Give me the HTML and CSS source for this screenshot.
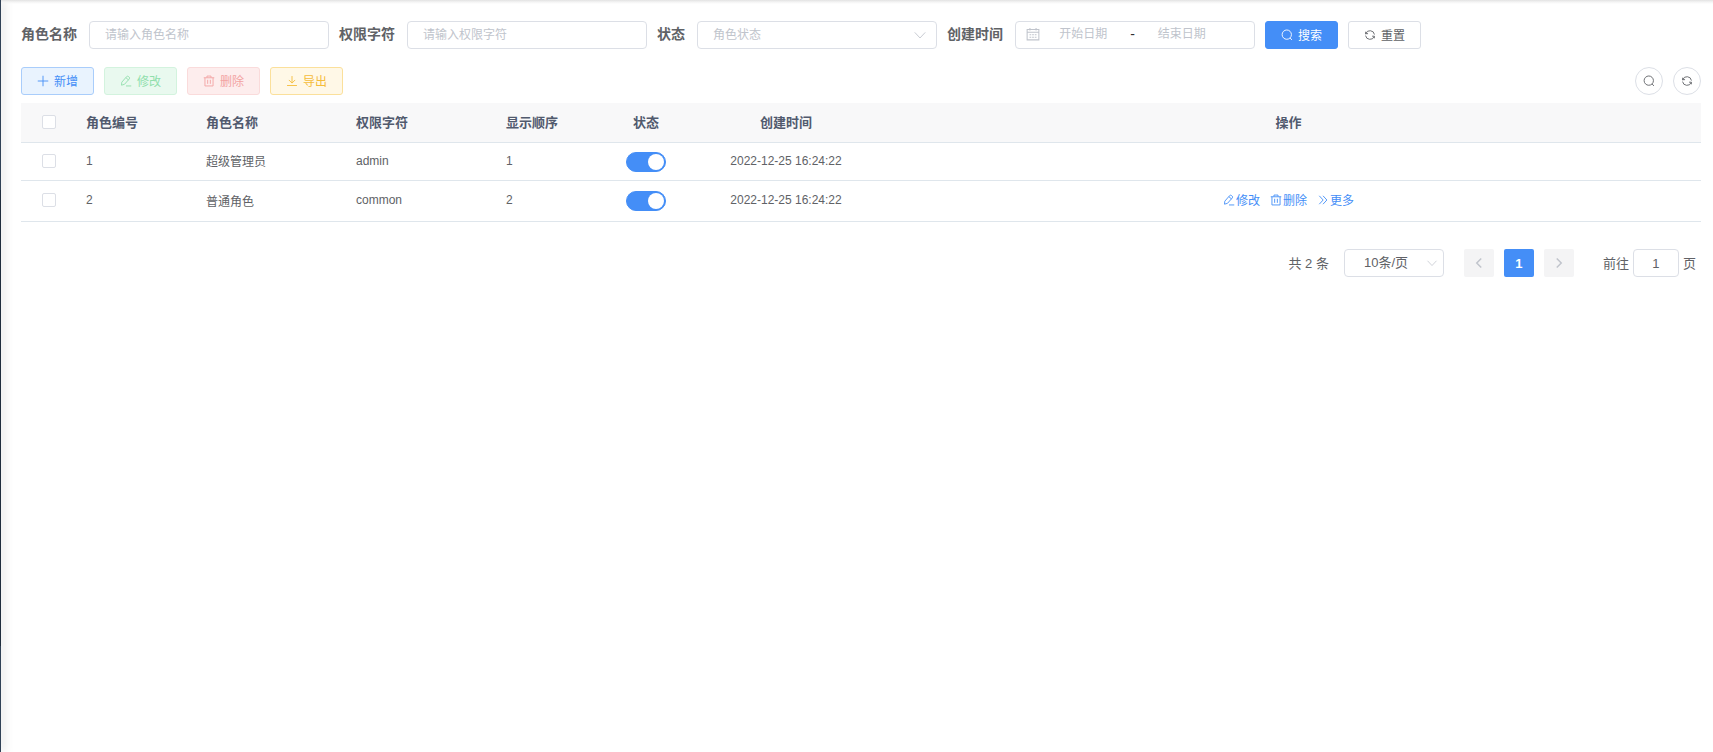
FILE: index.html
```html
<!DOCTYPE html>
<html lang="zh-CN">
<head>
<meta charset="utf-8">
<title>角色管理</title>
<link rel="stylesheet" href="styles.css">
</head>
<body>
<svg class="sprite" aria-hidden="true">
  <symbol id="i-search" viewBox="0 0 16 16"><circle cx="7.7" cy="7.5" r="6.2"/><path d="M12.2 12l2.3 2.6"/></symbol>
  <symbol id="i-refresh" viewBox="0 0 16 16"><path d="M2.2 7V3.6M2.4 6.2H5.4M2.4 6A6 6 0 0 1 13.9 7.4M13.8 12.4V9.6H10.8M13.6 10A6 6 0 0 1 2.1 8.8"/></symbol>
  <symbol id="i-plus" viewBox="0 0 16 16"><path d="M8 1v14M1 8h14"/></symbol>
  <symbol id="i-edit" viewBox="0 0 16 16"><path d="M2.4 9.6L8.8 2.2Q10 1 11.3 2L12.2 2.8Q13.4 3.9 12.4 5.2L6 12.4L2 13.6ZM7.9 3.6L11.2 6.5M8 14.6h7"/></symbol>
  <symbol id="i-delete" viewBox="0 0 16 16"><path d="M1 3.7h14M5.3 3.4V1.4h5.4v2M2.6 3.7v10.9h10.8V3.7M6.2 6.4v5.4M9.8 6.4v5.4"/></symbol>
  <symbol id="i-download" viewBox="0 0 16 16"><path d="M8 1.4v9.2M3.8 6.6L8 10.8l4.2-4.2M1.4 14h13.2"/></symbol>
  <symbol id="i-more" viewBox="0 0 16 16"><path d="M3 2.4L8.2 8L3 13.6M8 2.4L13.2 8L8 13.6"/></symbol>
  <symbol id="i-down" viewBox="0 0 16 16"><path d="M2 5l6 6.4L14 5"/></symbol>
  <symbol id="i-left" viewBox="0 0 16 16"><path d="M11 2L5 8l6 6"/></symbol>
  <symbol id="i-right" viewBox="0 0 16 16"><path d="M5 2l6 6-6 6"/></symbol>
  <symbol id="i-date" viewBox="0 0 16 16"><path d="M1.3 2.8h13.4v11.9H1.3zM1.3 6h13.4M4.5 1v3M11.5 1v3M4 8.8h2M7 8.8h2M10 8.8h2M4 11.8h2M7 11.8h2M10 11.8h2"/></symbol>
</svg>

<div class="app">
  <aside class="sidebar"><div class="submenu"></div></aside>
  <main class="content">
    <form class="filters">
      <div class="field">
        <label for="role-name">角色名称</label>
        <input class="control" id="role-name" type="text" placeholder="请输入角色名称">
      </div>
      <div class="field">
        <label for="role-key">权限字符</label>
        <input class="control" id="role-key" type="text" placeholder="请输入权限字符">
      </div>
      <div class="field">
        <label for="role-status">状态</label>
        <div class="select">
          <select class="control" id="role-status"><option>角色状态</option></select>
          <svg class="icon arrow"><use href="#i-down"/></svg>
        </div>
      </div>
      <div class="field">
        <label for="date-start">创建时间</label>
        <div class="control range">
          <svg class="icon"><use href="#i-date"/></svg>
          <input id="date-start" type="text" placeholder="开始日期">
          <span>-</span>
          <input type="text" placeholder="结束日期" aria-label="结束日期">
        </div>
      </div>
      <button class="btn primary" type="button"><svg class="icon"><use href="#i-search"/></svg><span>搜索</span></button>
      <button class="btn" type="button"><svg class="icon"><use href="#i-refresh"/></svg><span>重置</span></button>
    </form>

    <div class="toolbar">
      <button class="btn add" type="button"><svg class="icon"><use href="#i-plus"/></svg><span>新增</span></button>
      <button class="btn edit" type="button" disabled><svg class="icon"><use href="#i-edit"/></svg><span>修改</span></button>
      <button class="btn remove" type="button" disabled><svg class="icon"><use href="#i-delete"/></svg><span>删除</span></button>
      <button class="btn export" type="button"><svg class="icon"><use href="#i-download"/></svg><span>导出</span></button>
      <div class="tools">
        <button class="round" type="button" aria-label="显示搜索"><svg class="icon"><use href="#i-search"/></svg></button>
        <button class="round" type="button" aria-label="刷新"><svg class="icon"><use href="#i-refresh"/></svg></button>
      </div>
    </div>

    <table class="roles">
      <colgroup>
        <col class="w-check"><col class="w-id"><col class="w-text"><col class="w-text"><col class="w-short"><col class="w-short"><col class="w-time"><col>
      </colgroup>
      <thead>
        <tr>
          <th class="center"><input type="checkbox" aria-label="全选"></th>
          <th>角色编号</th><th>角色名称</th><th>权限字符</th><th>显示顺序</th>
          <th class="center">状态</th><th class="center">创建时间</th><th class="center">操作</th>
        </tr>
      </thead>
      <tbody>
        <tr>
          <td class="center"><input type="checkbox" aria-label="选择超级管理员"></td>
          <td>1</td><td>超级管理员</td><td>admin</td><td>1</td>
          <td class="center toggle"><input class="switch" type="checkbox" checked aria-label="超级管理员状态"></td>
          <td class="center">2022-12-25 16:24:22</td><td></td>
        </tr>
        <tr class="tall">
          <td class="center"><input type="checkbox" aria-label="选择普通角色"></td>
          <td>2</td><td>普通角色</td><td>common</td><td>2</td>
          <td class="center toggle"><input class="switch" type="checkbox" checked aria-label="普通角色状态"></td>
          <td class="center">2022-12-25 16:24:22</td>
          <td>
            <div class="actions">
              <button type="button"><svg class="icon"><use href="#i-edit"/></svg><span>修改</span></button>
              <button type="button"><svg class="icon"><use href="#i-delete"/></svg><span>删除</span></button>
              <button type="button"><svg class="icon"><use href="#i-more"/></svg><span>更多</span></button>
            </div>
          </td>
        </tr>
      </tbody>
    </table>

    <nav class="pagination" aria-label="分页">
      <span>共 2 条</span>
      <div class="select size">
        <select class="control" aria-label="每页条数"><option>10条/页</option></select>
        <svg class="icon arrow"><use href="#i-down"/></svg>
      </div>
      <div class="pages">
        <button type="button" disabled aria-label="上一页"><svg class="icon"><use href="#i-left"/></svg></button>
        <button class="current" type="button">1</button>
        <button type="button" disabled aria-label="下一页"><svg class="icon"><use href="#i-right"/></svg></button>
      </div>
      <label class="jump"><span>前往</span><input class="control" type="text" value="1"><span>页</span></label>
    </nav>
  </main>
</div>
</body>
</html>
```
FILE: styles.css
```css
* { box-sizing: border-box; }

body {
  margin: 0;
  background: #fff;
  color: #606266;
  font-family: "Liberation Sans", "Noto Sans CJK SC", sans-serif;
  font-size: 12px;
}

button, input, select { font: inherit; color: inherit; }
button { cursor: pointer; }

.sprite { display: none; }

.icon {
  flex: none;
  width: 12px;
  height: 12px;
  fill: none;
  stroke: currentColor;
  stroke-width: 1.2;
}

.app { display: flex; min-height: 100vh; }

.sidebar {
  flex: none;
  width: 1px;
  padding-top: 190px;
  background: #304156;
  box-shadow: 2px 0 8px rgba(0, 0, 0, .5);
}
.submenu { height: 456px; background: #1f2d3d; }

.content {
  flex: 1;
  min-width: 0;
  padding: 21px 12px 20px 20px;
  background: linear-gradient(#e2e2e2, #f4f4f4 2px, transparent 4px);
}

/* Filter form */
.filters { display: flex; flex-wrap: wrap; align-items: center; gap: 10px; }
.field { display: flex; align-items: center; gap: 12px; }
.field label { padding-bottom: 2px; font-size: 14px; font-weight: 700; line-height: 26px; }

.control {
  width: 240px;
  height: 28px;
  padding: 0 15px;
  border: 1px solid #dcdfe6;
  border-radius: 4px;
  background: #fff;
  outline: none;
}
::placeholder { color: #c0c4cc; opacity: 1; }

.select { position: relative; display: flex; }
.select select { appearance: none; color: #c0c4cc; }
.select .arrow {
  position: absolute;
  top: 7px;
  right: 10px;
  width: 14px;
  height: 14px;
  color: #c0c4cc;
  stroke-width: 1;
  pointer-events: none;
}

.range { display: flex; align-items: center; padding: 0 29px 2px 10px; }
.range .icon { width: 14px; height: 14px; color: #c0c4cc; }
.range input {
  flex: 1;
  min-width: 0;
  padding: 0;
  border: 0;
  outline: none;
  text-align: center;
}
.range span { width: 12px; text-align: center; font-size: 14px; color: #303133; }

/* Buttons */
.btn {
  display: inline-flex;
  align-items: center;
  gap: 5px;
  height: 28px;
  padding: 0 15px;
  border: 1px solid #dcdfe6;
  border-radius: 3px;
  background: #fff;
}
.btn span, .actions span, .pagination span { padding-bottom: 2px; }
.primary { border-color: #448ef7; background: #448ef7; color: #fff; }
.add { border-color: #a9cdfb; background: #e9f3fe; color: #448ef7; }
.edit { border-color: #d3f3de; background: #e9f9ef; color: #90dfac; }
.remove { border-color: #fadbdb; background: #fdeded; color: #f3a3a3; }
.export { border-color: #fbe09b; background: #fff8e7; color: #f5bc3a; }

.toolbar { display: flex; gap: 10px; margin: 18px 0 8px; }
.tools { display: flex; gap: 10px; margin-left: auto; }
.round {
  display: grid;
  place-items: center;
  width: 28px;
  height: 28px;
  padding: 0;
  border: 1px solid #dcdfe6;
  border-radius: 50%;
  background: #fff;
}

/* Role table */
.roles { width: 100%; border-collapse: separate; border-spacing: 0; table-layout: fixed; }
.w-check { width: 55px; }
.w-id { width: 120px; }
.w-text { width: 150px; }
.w-short { width: 100px; }
.w-time { width: 180px; }
.roles th, .roles td {
  height: 38px;
  padding: 0 10px 2px;
  border-bottom: 1px solid #dfe6ec;
  text-align: left;
}
.roles th {
  height: 40px;
  background: #f8f8f9;
  color: #515a6e;
  font-size: 13px;
  font-weight: 700;
}
.roles .tall td { height: 41px; }
.roles .center { text-align: center; }
.roles .toggle { padding-bottom: 0; }

.roles input {
  appearance: none;
  display: block;
  width: 14px;
  height: 14px;
  margin: 0 auto;
  border: 1px solid #dcdfe6;
  border-radius: 2px;
  background: #fff;
}
.roles .switch {
  width: 40px;
  height: 20px;
  padding: 1px;
  border-radius: 10px;
  border-color: #448ef7;
  background: #448ef7;
}
.roles .switch::before {
  content: "";
  display: block;
  width: 16px;
  height: 16px;
  margin-left: auto;
  border-radius: 50%;
  background: #fff;
}

.actions { display: flex; justify-content: center; gap: 10px; }
.actions button {
  display: inline-flex;
  align-items: center;
  gap: 1px;
  padding: 0;
  border: 0;
  background: none;
  color: #448ef7;
}

/* Pagination */
.pagination {
  display: flex;
  align-items: center;
  justify-content: flex-end;
  margin-top: 27px;
  padding-right: 5px;
  font-size: 13px;
}
.size { margin: 0 20px 0 15px; }
.size select { width: 100px; padding: 0 19px 1px; color: #606266; }
.size .arrow { top: 8px; right: 6px; width: 12px; height: 12px; }
.pages { display: flex; gap: 10px; }
.pages button {
  display: grid;
  place-items: center;
  width: 30px;
  height: 28px;
  padding: 0;
  border: 0;
  border-radius: 2px;
  background: #f4f4f5;
  color: #c0c4cc;
}
.pages .icon { stroke-width: 2; }
.pages .current { background: #448ef7; color: #fff; font-weight: 700; }
.jump { display: flex; align-items: center; gap: 4px; margin-left: 29px; }
.jump .control { width: 46px; padding: 0 3px; text-align: center; }
```
